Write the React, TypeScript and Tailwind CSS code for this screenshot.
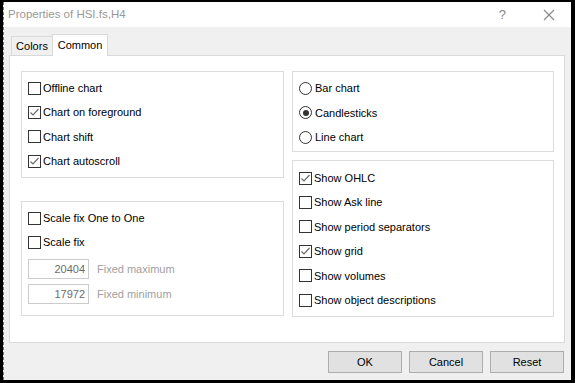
import React from 'react';

const font = { fontFamily: '"Segoe UI", "Liberation Sans", Arial, sans-serif' };

function Check({ checked, label }: { checked?: boolean; label: string }) {
  return (
    <div className="flex h-[24.4px] items-center">
      <span className="flex h-[13px] w-[13px] shrink-0 items-center justify-center border border-[#333] bg-white">
        {checked && (
          <svg width="11" height="11" viewBox="0 0 11 11">
            <polyline points="1.5,5.5 4,8 9.5,2" fill="none" stroke="#6b6b6b" strokeWidth="1.2" />
          </svg>
        )}
      </span>
      <span className="ml-[2px] text-[11px] text-black">{label}</span>
    </div>
  );
}

function Radio({ checked, label }: { checked?: boolean; label: string }) {
  return (
    <div className="flex h-[24.5px] items-center">
      <span className="flex h-[13px] w-[13px] shrink-0 items-center justify-center rounded-full border border-[#333] bg-white">
        {checked && <span className="h-[6px] w-[6px] rounded-full bg-[#333]" />}
      </span>
      <span className="ml-[3px] text-[11px] text-black">{label}</span>
    </div>
  );
}

function FixedInput({ value, label }: { value: string; label: string }) {
  return (
    <div className="flex items-center">
      <div className="flex h-5 w-[61px] items-center justify-end border border-[#cccccc] bg-white pr-[3px] text-[11px] text-[#6d6d6d]">
        {value}
      </div>
      <span className="ml-[8px] text-[11px] text-[#a0a0a0]">{label}</span>
    </div>
  );
}

function Btn({ label }: { label: string }) {
  return (
    <button className="flex h-[22px] w-[74px] items-center justify-center border border-[#adadad] bg-[#e1e1e1] text-[11px] text-black">
      {label}
    </button>
  );
}

export default function App() {
  return (
    <div className="h-[383px] w-[575px] overflow-hidden bg-black pl-[3px] pt-[2px]" style={font}>
      <div className="flex h-[378px] w-[568px] flex-col border-l border-dashed border-[#777] bg-[#f0f0f0]">
        {/* title bar */}
        <div className="flex h-[25px] items-center bg-white pl-[4px]">
          <span className="text-[11.5px] text-[#999]">Properties of HSI.fs,H4</span>
          <span className="ml-auto mr-[37px] text-[13px] text-[#888]">?</span>
          <svg className="mr-[16px]" width="12" height="12" viewBox="0 0 12 12">
            <path d="M1 1 L11 11 M11 1 L1 11" stroke="#888" strokeWidth="1.1" />
          </svg>
        </div>

        {/* tabs */}
        <div className="mt-[7px] flex items-end pl-[7px]">
          <div className="flex h-[19px] w-[42px] items-center justify-center border border-b-0 border-[#d9d9d9] bg-[#f0f0f0] text-[11px] text-black">
            Colors
          </div>
          <div className="relative z-10 -mb-px -ml-px flex h-[22px] w-[56px] items-center justify-center border border-b-0 border-[#d9d9d9] bg-white pb-[1px] text-[11px] text-black">
            Common
          </div>
        </div>

        {/* panel */}
        <div className="ml-[5px] h-[288px] w-[556px] border border-[#d9d9d9] bg-white pl-[11px] pt-[15px]">
          <div className="grid grid-cols-[263px_262px] gap-x-[8px]">
            <div className="flex flex-col">
              <div className="h-[107px] border border-[#dcdcdc] pl-[6px] pt-[4px]">
                <Check label="Offline chart" />
                <Check checked label="Chart on foreground" />
                <Check label="Chart shift" />
                <Check checked label="Chart autoscroll" />
              </div>
              <div className="mt-[23px] h-[115px] border border-[#dcdcdc] pl-[6px] pt-[4px]">
                <Check label="Scale fix One to One" />
                <Check label="Scale fix" />
                <div className="mt-[4px] flex flex-col gap-[5px]">
                  <FixedInput value="20404" label="Fixed maximum" />
                  <FixedInput value="17972" label="Fixed minimum" />
                </div>
              </div>
            </div>
            <div className="flex flex-col">
              <div className="h-[81px] border border-[#dcdcdc] pl-[6px] pt-[4px]">
                <Radio label="Bar chart" />
                <Radio checked label="Candlesticks" />
                <Radio label="Line chart" />
              </div>
              <div className="mt-[8px] h-[157px] border border-[#dcdcdc] pl-[6px] pt-[5px]">
                <Check checked label="Show OHLC" />
                <Check label="Show Ask line" />
                <Check label="Show period separators" />
                <Check checked label="Show grid" />
                <Check label="Show volumes" />
                <Check label="Show object descriptions" />
              </div>
            </div>
          </div>
        </div>

        {/* buttons */}
        <div className="mt-[8px] flex justify-end gap-[7px] pr-[7px]">
          <Btn label="OK" />
          <Btn label="Cancel" />
          <Btn label="Reset" />
        </div>
      </div>
    </div>
  );
}
